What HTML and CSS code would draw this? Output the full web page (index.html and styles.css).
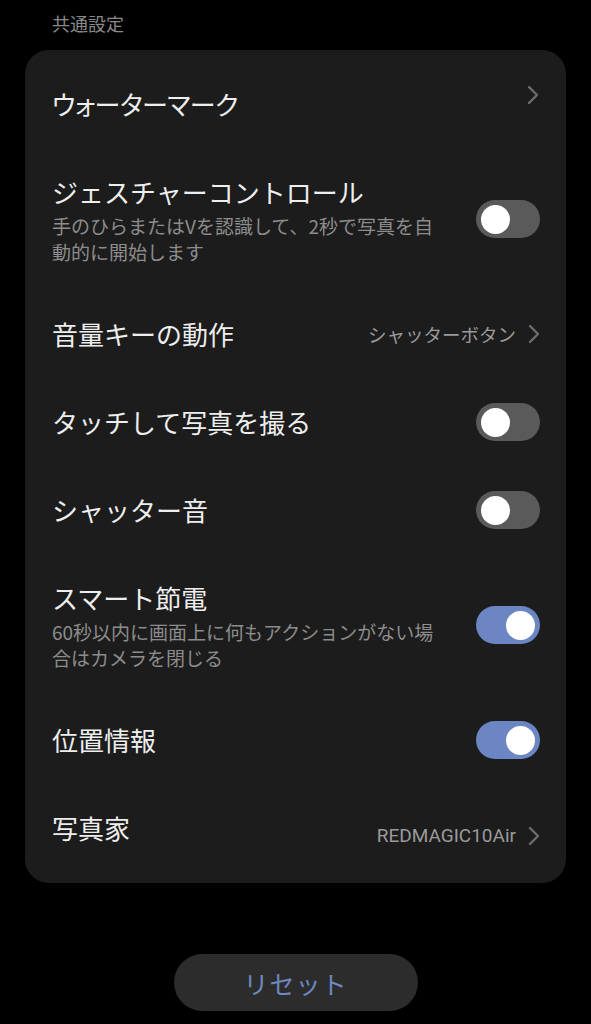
FILE: index.html
```html
<!DOCTYPE html>
<html lang="ja">
<head>
<meta charset="utf-8">
<title>共通設定</title>
<link rel="stylesheet" href="styles.css">
</head>
<body>
<main class="page">
  <h2 class="section-label">共通設定</h2>
  <section class="card">
    <div class="row">
      <div class="text"><div class="title title--narrow">ウォーターマーク</div></div>
      <svg class="chevron chevron--raised" viewBox="0 0 12 20" width="12" height="20"><polyline points="2,2 10,10 2,18"/></svg>
    </div>
    <div class="row">
      <div class="text">
        <div class="title">ジェスチャーコントロール</div>
        <div class="sub">手のひらまたはVを認識して、2秒で写真を自動的に開始します</div>
      </div>
      <div class="toggle"><span class="knob"></span></div>
    </div>
    <div class="row">
      <div class="text"><div class="title">音量キーの動作</div></div>
      <div class="trail">
        <span class="value">シャッターボタン</span>
        <svg class="chevron" viewBox="0 0 12 20" width="12" height="20"><polyline points="2,2 10,10 2,18"/></svg>
      </div>
    </div>
    <div class="row">
      <div class="text"><div class="title">タッチして写真を撮る</div></div>
      <div class="toggle"><span class="knob"></span></div>
    </div>
    <div class="row">
      <div class="text"><div class="title">シャッター音</div></div>
      <div class="toggle"><span class="knob"></span></div>
    </div>
    <div class="row">
      <div class="text">
        <div class="title">スマート節電</div>
        <div class="sub">60秒以内に画面上に何もアクションがない場合はカメラを閉じる</div>
      </div>
      <div class="toggle toggle--on"><span class="knob"></span></div>
    </div>
    <div class="row">
      <div class="text"><div class="title">位置情報</div></div>
      <div class="toggle toggle--on"><span class="knob"></span></div>
    </div>
    <div class="row row--last">
      <div class="text"><div class="title">写真家</div></div>
      <div class="trail trail--lowered">
        <span class="value value--latin">REDMAGIC10Air</span>
        <svg class="chevron" viewBox="0 0 12 20" width="12" height="20"><polyline points="2,2 10,10 2,18"/></svg>
      </div>
    </div>
  </section>
  <div class="actions">
    <button class="reset" type="button">リセット</button>
  </div>
</main>
</body>
</html>
```

FILE: styles.css
```css
* { box-sizing: border-box; }

html, body {
  margin: 0;
  padding: 0;
  background: #000;
}

body {
  font-family: "Noto Sans CJK JP", "Noto Sans", Roboto, sans-serif;
  color: #ededed;
  width: 591px;
  height: 1024px;
  overflow: hidden;
}

.page {
  padding-top: 10px;
}

.section-label {
  margin: 0 0 14px 52px;
  font-size: 18px;
  line-height: 26px;
  font-weight: 400;
  color: #8a8a8a;
}

.card {
  margin: 0 25px 0 25px;
  background: #1c1c1c;
  border-radius: 24px;
  padding: 10px 0 10px;
}

.row {
  display: flex;
  align-items: center;
  gap: 16px;
  padding: 25px 26px 25px 27px;
}

.row--last {
  padding-top: 23px;
  padding-bottom: 24px;
}

.text {
  flex: 1;
  min-width: 0;
}

.title {
  font-size: 26px;
  line-height: 38px;
  color: #eeeeee;
  white-space: nowrap;
}

.title--narrow {
  font-feature-settings: "palt" 1;
  letter-spacing: -0.5px;
}

.sub {
  margin-top: 2px;
  max-width: 390px;
  font-size: 19px;
  line-height: 26px;
  color: #8c8c8c;
}

.trail {
  display: flex;
  align-items: center;
  gap: 12px;
}

.trail--lowered {
  margin-top: 16px;
}

.value {
  font-size: 18.5px;
  line-height: 26px;
  color: #9a9a9a;
  white-space: nowrap;
}

.value--latin {
  font-family: Roboto, "Noto Sans CJK JP", sans-serif;
  font-size: 19px;
}

.chevron {
  flex: none;
  fill: none;
  stroke: #6c6c6c;
  stroke-width: 2.4;
  stroke-linecap: round;
  stroke-linejoin: round;
}

.chevron--raised {
  margin-bottom: 18px;
  margin-right: 1px;
}

.toggle {
  flex: none;
  width: 64px;
  height: 38px;
  border-radius: 19px;
  background: #5a5a5a;
  display: flex;
  align-items: center;
  padding: 0 5px;
}

.toggle--on {
  background: #6c86c3;
  justify-content: flex-end;
}

.knob {
  width: 29px;
  height: 29px;
  border-radius: 50%;
  background: #ffffff;
}

.actions {
  display: flex;
  justify-content: center;
  margin-top: 71px;
}

.reset {
  width: 244px;
  height: 57px;
  border: none;
  border-radius: 29px;
  background: #2c2c2c;
  color: #6e88c0;
  font-family: "Noto Sans CJK JP", sans-serif;
  font-size: 25px;
  letter-spacing: 1px;
  padding: 0;
}
```
